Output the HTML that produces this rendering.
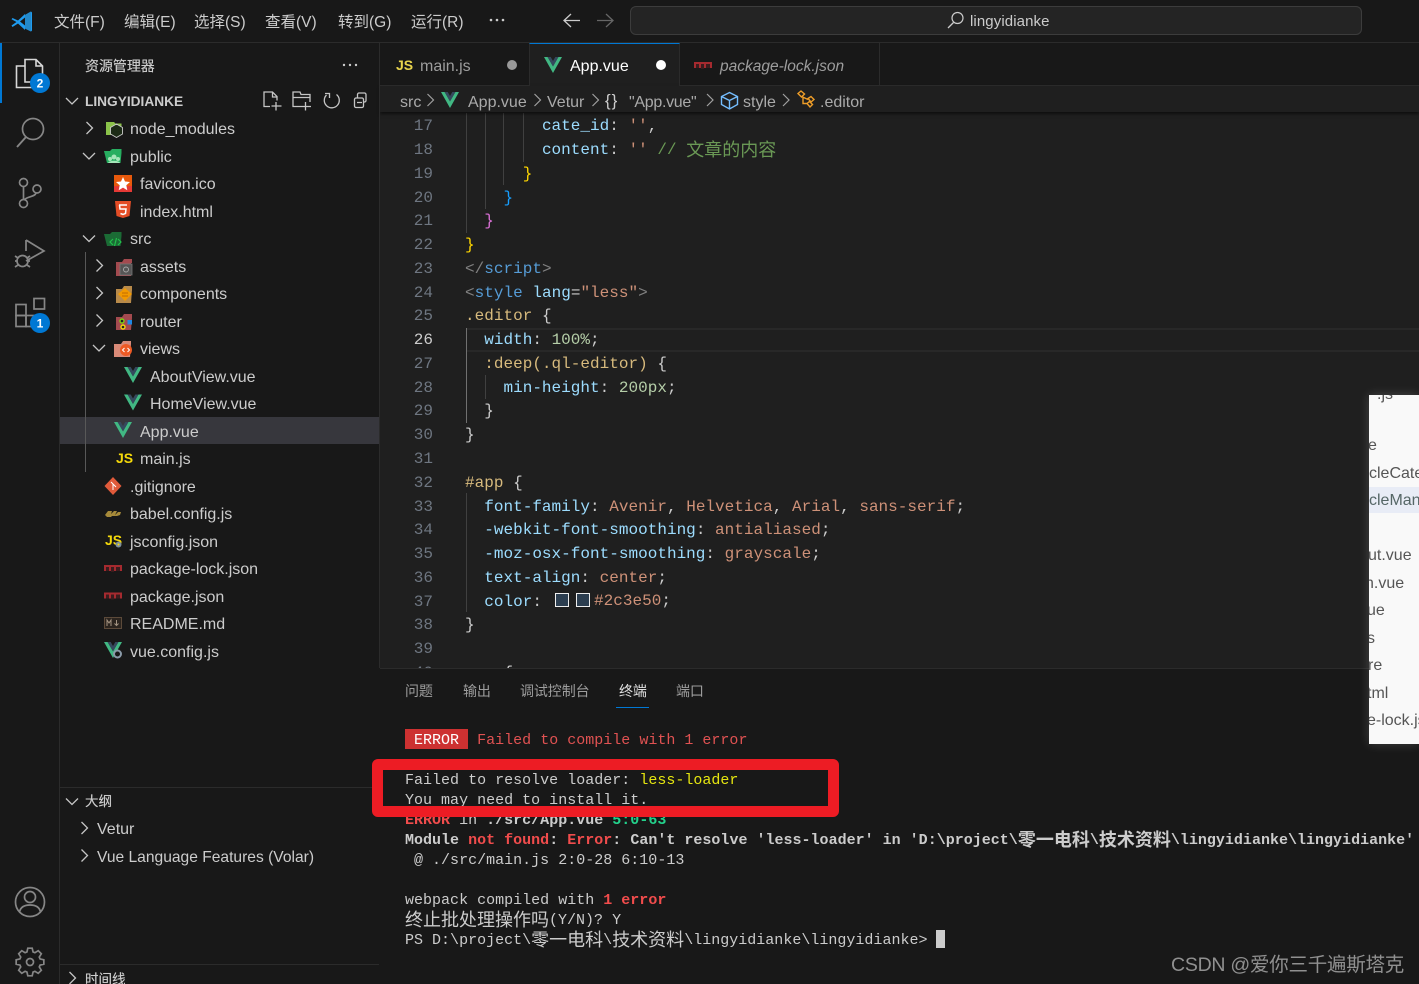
<!DOCTYPE html>
<html lang="zh">
<head>
<meta charset="utf-8">
<title>VS Code</title>
<style>
html,body{margin:0;padding:0;background:#181818;overflow:hidden;width:1419px;height:984px}
body{position:relative;font-family:"Liberation Sans","Noto Sans CJK SC",sans-serif;color:#ccc}
.a{position:absolute}
.t{position:absolute;white-space:pre;line-height:20px;font-size:16px;color:#ccc}
.m{font-size:15.5px;color:#ccc}
.s{font-size:16px;color:#ccc}
.b{color:#aaa;font-size:16px}
.p{font-size:14px;color:#9d9d9d;letter-spacing:-.1px}
#ln{position:absolute;left:380px;top:91.5px;width:53px;text-align:right;font:16px/23.77px "Liberation Mono",monospace;color:#6e7681}
#code{position:absolute;left:465px;top:91.5px;font:16px/23.77px "Liberation Mono","Noto Sans CJK SC",monospace;letter-spacing:.015px;color:#ccc}
#code div,#ln div{height:23.77px;white-space:pre}
.cj{font-family:"Noto Sans CJK SC",sans-serif;font-size:18px;line-height:0;letter-spacing:0;position:relative;top:1.5px}
.p1{color:#9cdcfe}.st{color:#ce9178}.cm{color:#6a9955}.tg{color:#808080}.kw{color:#569cd6}.se{color:#d7ba7d}.nu{color:#b5cea8}.go{color:#ffd700}.bl{color:#179fff}.pk{color:#da70d6}
#term{position:absolute;left:405px;top:731px;font:15px/20px "Liberation Mono","Noto Sans CJK SC",monospace;letter-spacing:.01px;color:#ccc}
#term div{height:20px;white-space:pre}
#term .cj{font-size:18px;top:2px}
.re{color:#f14c4c}
.bd{font-weight:bold}
.ov{position:absolute;left:1369px;top:395px;width:50px;height:349px;background:#f9f9f9;overflow:hidden;box-shadow:0 0 10px rgba(255,255,255,.18)}
.ov span{position:absolute;white-space:pre;font-size:16px;line-height:20px;color:#555}
</style>
</head>
<body>
<!-- editor bg -->
<div class="a" style="left:380px;top:86px;width:1039px;height:582px;background:#1f1f1f"></div>
<div class="a" style="left:466px;top:328px;width:953px;height:2px;background:#282828"></div>
<div class="a" style="left:466px;top:350px;width:953px;height:2px;background:#282828"></div>

<div class="a" id="clip" style="left:380px;top:112px;width:1039px;height:556px;overflow:hidden">
<div style="position:absolute;left:-380px;top:-112px;width:1419px;height:984px">
<div class="a" style="left:466px;top:113px;width:1px;height:120px;background:#404040"></div>
<div class="a" style="left:485px;top:113px;width:1px;height:96px;background:#404040"></div>
<div class="a" style="left:503px;top:113px;width:1px;height:72px;background:#404040"></div>
<div class="a" style="left:523px;top:113px;width:1px;height:49px;background:#404040"></div>
<div class="a" style="left:466px;top:328px;width:1px;height:95px;background:#707070"></div>
<div class="a" style="left:485px;top:375px;width:1px;height:24px;background:#404040"></div>
<div class="a" style="left:466px;top:493px;width:1px;height:119px;background:#404040"></div>
<div id="ln"><div>16</div><div>17</div><div>18</div><div>19</div><div>20</div><div>21</div><div>22</div><div>23</div><div>24</div><div>25</div><div style="color:#ccc">26</div><div>27</div><div>28</div><div>29</div><div>30</div><div>31</div><div>32</div><div>33</div><div>34</div><div>35</div><div>36</div><div>37</div><div>38</div><div>39</div><div>40</div></div>
<div id="code">
<div>        <span class="p1">title</span>: <span class="st">''</span>,</div>
<div>        <span class="p1">cate_id</span>: <span class="st">''</span>,</div>
<div>        <span class="p1">content</span>: <span class="st">''</span> <span class="cm">// <span class="cj">文章的内容</span></span></div>
<div>      <span class="go">}</span></div>
<div>    <span class="bl">}</span></div>
<div>  <span class="pk">}</span></div>
<div><span class="go">}</span></div>
<div><span class="tg">&lt;/</span><span class="kw">script</span><span class="tg">&gt;</span></div>
<div><span class="tg">&lt;</span><span class="kw">style</span> <span class="p1">lang</span>=<span class="st">"less"</span><span class="tg">&gt;</span></div>
<div><span class="se">.editor</span> {</div>
<div>  <span class="p1">width</span>: <span class="nu">100%</span>;</div>
<div>  <span class="se">:deep(.ql-editor)</span> {</div>
<div>    <span class="p1">min-height</span>: <span class="nu">200px</span>;</div>
<div>  }</div>
<div>}</div>
<div> </div>
<div><span class="se">#app</span> {</div>
<div>  <span class="p1">font-family</span>: <span class="st">Avenir</span>, <span class="st">Helvetica</span>, <span class="st">Arial</span>, <span class="st">sans-serif</span>;</div>
<div>  <span class="p1">-webkit-font-smoothing</span>: <span class="st">antialiased</span>;</div>
<div>  <span class="p1">-moz-osx-font-smoothing</span>: <span class="st">grayscale</span>;</div>
<div>  <span class="p1">text-align</span>: <span class="st">center</span>;</div>
<div>  <span class="p1">color</span>:</div>
<div>}</div>
<div> </div>
<div>    {</div>
</div>
<div class="a" style="left:555px;top:593px;width:12px;height:12px;border:1px solid #eee;background:#2c3e50"></div>
<div class="a" style="left:576px;top:593px;width:12px;height:12px;border:1px solid #eee;background:#2c3e50"></div>
<div class="t" style="left:594px;top:591px;font:16px/20px 'Liberation Mono',monospace;letter-spacing:.015px"><span class="st">#2c3e50</span>;</div>
</div>
</div>

<!-- title bar -->
<div class="a" style="left:0;top:0;width:1419px;height:42px;background:#181818;border-bottom:1px solid #2b2b2b"></div>
<div class="t m" style="left:54px;top:13px">文件(F)</div>
<div class="t m" style="left:124px;top:13px">编辑(E)</div>
<div class="t m" style="left:194px;top:13px">选择(S)</div>
<div class="t m" style="left:265px;top:13px">查看(V)</div>
<div class="t m" style="left:338px;top:13px">转到(G)</div>
<div class="t m" style="left:411px;top:13px">运行(R)</div>
<div class="a" style="left:630px;top:6px;width:730px;height:27px;background:#242424;border:1px solid #3c3c3c;border-radius:6px"></div>
<div class="t" style="left:970px;top:12px;font-size:15px;letter-spacing:.1px">lingyidianke</div>

<!-- tabs -->
<div class="a" style="left:380px;top:43px;width:1039px;height:43px;background:#181818;border-bottom:1px solid #2b2b2b;box-sizing:border-box"></div>
<div class="a" style="left:529px;top:43px;width:151px;height:43px;background:#1f1f1f;border-left:1px solid #2b2b2b;border-right:1px solid #2b2b2b;box-sizing:border-box;border-top:1px solid #0078d4"></div>
<div class="a" style="left:879px;top:43px;width:1px;height:43px;background:#2b2b2b"></div>
<div class="t" style="left:396px;top:55px;color:#e8d44d;font-weight:bold;font-size:14px">JS</div>
<div class="t" style="left:420px;top:57px;color:#9d9d9d;font-size:16px">main.js</div>
<div class="t" style="left:570px;top:57px;color:#fff;font-size:16px">App.vue</div>
<div class="t" style="left:720px;top:57px;color:#9d9d9d;font-size:15.5px;font-style:italic">package-lock.json</div>

<!-- breadcrumbs -->
<div class="a" style="left:380px;top:86px;width:1039px;height:26px;background:#1f1f1f;box-shadow:0 2px 3px rgba(0,0,0,.55)"></div>
<div class="t b" style="left:400px;top:93px">src</div>
<div class="t b" style="left:468px;top:93px">App.vue</div>
<div class="t b" style="left:547px;top:93px">Vetur</div>
<div class="t b" style="left:605px;top:91px;color:#ccc;font-size:17px;letter-spacing:1px">{}</div>
<div class="t b" style="left:629px;top:93px;letter-spacing:-.3px">"App.vue"</div>
<div class="t b" style="left:743px;top:93px">style</div>
<div class="t b" style="left:820px;top:93px">.editor</div>

<!-- sidebar -->
<div class="a" style="left:59px;top:43px;width:1px;height:941px;background:#2b2b2b"></div>
<div class="a" style="left:379px;top:43px;width:1px;height:625px;background:#2b2b2b"></div>
<div class="a" style="left:0;top:43px;width:2px;height:60px;background:#0078d4"></div>
<div class="a" style="left:60px;top:417px;width:319px;height:27px;background:#37373d"></div>
<div class="a" style="left:85px;top:252px;width:1px;height:220px;background:#585858"></div>
<div class="a" style="left:60px;top:787px;width:319px;height:1px;background:#2b2b2b"></div>
<div class="a" style="left:60px;top:964px;width:319px;height:1px;background:#2b2b2b"></div>

<div class="t" style="left:85px;top:56px;font-size:14px;letter-spacing:-.05px;text-shadow:0 0 .4px #ccc">资源管理器</div>
<div class="t" style="left:85px;top:92px;font-size:13.7px;font-weight:bold">LINGYIDIANKE</div>
<div class="t s" style="left:130px;top:120px">node_modules</div>
<div class="t s" style="left:130px;top:148px">public</div>
<div class="t s" style="left:140px;top:175px">favicon.ico</div>
<div class="t s" style="left:140px;top:203px">index.html</div>
<div class="t s" style="left:130px;top:230px">src</div>
<div class="t s" style="left:140px;top:258px">assets</div>
<div class="t s" style="left:140px;top:285px">components</div>
<div class="t s" style="left:140px;top:313px">router</div>
<div class="t s" style="left:140px;top:340px">views</div>
<div class="t s" style="left:150px;top:368px">AboutView.vue</div>
<div class="t s" style="left:150px;top:395px">HomeView.vue</div>
<div class="t s" style="left:140px;top:423px">App.vue</div>
<div class="t s" style="left:140px;top:450px">main.js</div>
<div class="t s" style="left:130px;top:478px">.gitignore</div>
<div class="t s" style="left:130px;top:505px">babel.config.js</div>
<div class="t s" style="left:130px;top:533px">jsconfig.json</div>
<div class="t s" style="left:130px;top:560px">package-lock.json</div>
<div class="t s" style="left:130px;top:588px">package.json</div>
<div class="t s" style="left:130px;top:615px">README.md</div>
<div class="t s" style="left:130px;top:643px">vue.config.js</div>
<div class="t" style="left:116px;top:448px;color:#f5d90a;font-weight:bold;font-size:14px">JS</div>
<div class="t" style="left:105px;top:530px;color:#f5d90a;font-weight:bold;font-size:14px">JS</div>
<div class="t" style="left:85px;top:792px;font-size:13.5px;text-shadow:0 0 .4px #ccc">大纲</div>
<div class="t s" style="left:97px;top:820px">Vetur</div>
<div class="t s" style="left:97px;top:848px;font-size:15.6px">Vue Language Features (Volar)</div>
<div class="t" style="left:85px;top:970px;font-size:13.5px;text-shadow:0 0 .4px #ccc">时间线</div>

<!-- panel -->
<div class="a" style="left:380px;top:668px;width:1039px;height:316px;background:#181818;border-top:1px solid #2b2b2b;box-sizing:border-box"></div>
<div class="t p" style="left:405px;top:681px">问题</div>
<div class="t p" style="left:463px;top:681px">输出</div>
<div class="t p" style="left:520px;top:681px">调试控制台</div>
<div class="t p" style="left:619px;top:681px;color:#e0e0e0">终端</div>
<div class="t p" style="left:676px;top:681px">端口</div>
<div class="a" style="left:616px;top:707px;width:33px;height:1px;background:#0078d4"></div>

<div class="a" style="left:405px;top:729px;width:63px;height:20px;background:#cd3131"></div>
<div id="term">
<div><span style="color:#fff"> ERROR </span> <span style="color:#e05252">Failed to compile with 1 error</span></div>
<div> </div>
<div>Failed to resolve loader: <span style="color:#e5e510">less-loader</span></div>
<div>You may need to install it.</div>
<div class="bd"><span class="re">ERROR</span><span style="font-weight:normal"> in </span>./src/App.vue <span style="color:#23d18b">5:0-63</span></div>
<div class="bd">Module <span class="re">not found</span>: <span class="re">Error</span>: Can't resolve 'less-loader' in 'D:\project\<span class="cj">零一电科</span>\<span class="cj">技术资料</span>\lingyidianke\lingyidianke'</div>
<div> @ ./src/main.js 2:0-28 6:10-13</div>
<div> </div>
<div>webpack compiled with <span class="re bd">1 error</span></div>
<div><span class="cj">终止批处理操作吗</span>(Y/N)? Y</div>
<div>PS D:\project\<span class="cj">零一电科</span>\<span class="cj">技术资料</span>\lingyidianke\lingyidianke&gt;</div>
</div>
<div class="a" style="left:936px;top:930px;width:9px;height:18px;background:#ccc"></div>

<!-- red annotation box -->
<div class="a" style="left:372px;top:759px;width:467px;height:58px;box-sizing:border-box;border:11px solid #ed1c24;border-radius:6px"></div>

<!-- white overlay -->
<div class="ov">
<span style="left:8px;top:-10px">.js</span>
<span style="left:-1px;top:41px">e</span>
<div class="a" style="left:0;top:92px;width:50px;height:26px;background:#e8ecf6"></div>
<span style="left:0;top:69px">cleCategory</span>
<span style="left:0;top:96px;color:#566">cleManage</span>
<span style="left:-1px;top:151px">ut.vue</span>
<span style="left:-4px;top:179px">n.vue</span>
<span style="left:-2px;top:206px">ue</span>
<span style="left:-2px;top:234px">s</span>
<span style="left:-1px;top:261px">re</span>
<span style="left:-2px;top:289px">tml</span>
<span style="left:-2px;top:316px">e-lock.json</span>
<span style="left:8px;top:344px">.</span>
</div>

<!-- watermark -->
<div class="t" style="left:1171px;top:955px;font-size:19.5px;color:#909090;letter-spacing:-.25px">CSDN @爱你三千遍斯塔克</div>

<!-- icons -->
<svg class="a" style="left:0;top:0" width="1419" height="984" viewBox="0 0 1419 984" fill="none">
<defs>
<symbol id="v" overflow="visible"><path d="M0 0h3.6L9 9.4 14.4 0H18L9 16z" fill="#41b883"/><path d="M3.6 0h3.1L9 4 11.3 0h3.1L9 9.4z" fill="#35495e"/></symbol>
<symbol id="cr" overflow="visible"><path d="M-3-6 3 0-3 6" stroke="#c5c5c5" stroke-width="1.3"/></symbol>
<symbol id="cd" overflow="visible"><path d="M-6-3 0 3 6-3" stroke="#c5c5c5" stroke-width="1.3"/></symbol>
<symbol id="cb" overflow="visible"><path d="M-3-6 3 0-3 6" stroke="#a0a0a0" stroke-width="1.2"/></symbol>
<symbol id="npm" overflow="visible"><rect x="0" y="0" width="18" height="6" fill="#a52a2f"/><rect x="2" y="2" width="3" height="4" fill="#3a1c1e"/><rect x="7" y="2" width="3" height="5" fill="#3a1c1e"/><rect x="12" y="2" width="4" height="4" fill="#3a1c1e"/></symbol>
</defs>

<!-- vscode logo -->
<path d="M12.500 18 11.500 19.300 16.500 22 11.500 25.500 12.500 27 18 23.500 25 30 25 14 18 20.500z" fill="#1f9cf0"/>
<path d="M24 15.500 31 11.500 32 12.500V30.500L31 31.500 24 28 28 21.500z" fill="#1f9cf0"/>
<path d="M25 15 31 11.500V31.500L25 28.500z" fill="#2489ca"/>
<path d="M25 17.500 20 21.500 25 25.500z" fill="#181818"/>

<!-- title ... -->
<g fill="#ccc"><circle cx="491" cy="20" r="1.3"/><circle cx="497" cy="20" r="1.3"/><circle cx="503" cy="20" r="1.3"/></g>
<path d="M580 20.500H565M571 14l-7 6.500 7 6.500" stroke="#ccc" stroke-width="1.300"/>
<path d="M597 20.500h15M606 14l7 6.500-7 6.500" stroke="#666" stroke-width="1.300"/>
<circle cx="957.500" cy="18" r="5.500" stroke="#ccc" stroke-width="1.200"/><path d="M953.500 22.500 948 28" stroke="#ccc" stroke-width="1.300"/>

<!-- activity -->
<path d="M25 66V59.500h11l6.500 6.500V82H25v-16zM36 59.500V66h6.500M25 66h-8.500v21.500H34V82" stroke="#d7d7d7" stroke-width="1.600"/>
<circle cx="40" cy="83" r="10" fill="#0078d4"/>
<circle cx="33" cy="129" r="10.500" stroke="#868686" stroke-width="1.700"/><path d="M26 137 17 147" stroke="#868686" stroke-width="1.900"/>
<g stroke="#868686" stroke-width="1.700"><circle cx="23.500" cy="182.500" r="4"/><circle cx="23.500" cy="203.500" r="4"/><circle cx="37" cy="189" r="4"/><path d="M23.500 186.500v13M36 193c-1 4-8 3-11.500 6.500"/>
<path d="M26 240l18 11-18 10M26 240v11"/><circle cx="22.500" cy="261" r="5.500"/><path d="M15 256l3 2M30 256l-3 2M15 261h2M28 261h2M15 267l3-2M30 267l-3-2"/>
<rect x="16" y="304.500" width="10" height="11"/><rect x="16" y="315.500" width="10" height="11"/><rect x="26" y="315.500" width="10" height="11"/><rect x="34" y="298.500" width="10.500" height="10.500"/>
<circle cx="30" cy="902" r="14.500"/><circle cx="30" cy="897" r="5.500"/><path d="M19.500 912c1-5 5-7 10.500-7s9.500 2 10.500 7"/>
<path transform="translate(30 962)" d="M13.830-2.190 13.830 2.190 10.040 3.070 9.270 4.930 11.330 8.230 8.230 11.330 4.930 9.270 3.070 10.040 2.190 13.830-2.190 13.830-3.070 10.040-4.930 9.270-8.230 11.330-11.330 8.230-9.270 4.930-10.040 3.070-13.830 2.190-13.830-2.190-10.040-3.070-9.270-4.930-11.330-8.230-8.230-11.330-4.930-9.270-3.070-10.040-2.190-13.830 2.190-13.830 3.070-10.040 4.930-9.270 8.230-11.330 11.330-8.230 9.270-4.930 10.040-3.070z"/>
<circle cx="30" cy="962" r="3.500"/></g>
<circle cx="40" cy="323" r="10" fill="#0078d4"/>
<text x="40" y="87.500" font-family="Liberation Sans" font-size="12" font-weight="bold" fill="#fff" text-anchor="middle">2</text>
<text x="40" y="327.500" font-family="Liberation Sans" font-size="12" font-weight="bold" fill="#fff" text-anchor="middle">1</text>

<!-- sidebar header icons -->
<g fill="#ccc"><circle cx="344" cy="65" r="1.200"/><circle cx="350" cy="65" r="1.200"/><circle cx="356" cy="65" r="1.200"/></g>
<g stroke="#c5c5c5" stroke-width="1.300">
<path d="M270 106.500h-6V92h8.500l4.500 4.500v4M272.500 92v5h4.500M276 102v8.500M271.500 106h10"/>
<path d="M301 106.500h-8V92h7l1 2.500h9V102M293 97.500h17M305.500 102v8.500M301 106.500h10"/>
<path d="M326.500 94a7.500 7.500 0 1 0 10-.5M325 92.500h4.500V97" transform="translate(0 1)"/>
<rect x="354.500" y="98" width="9" height="9.500" rx="1.500"/><path d="M357.500 98v-3.500a1.500 1.500 0 0 1 1.500-1.500h5.500a1.500 1.500 0 0 1 1.500 1.500v6a1.500 1.500 0 0 1-1.500 1.500h-1M357 102.500h5"/>
</g>

<!-- chevrons -->
<use href="#cd" x="72" y="101"/>
<use href="#cr" x="89.500" y="128"/>
<use href="#cd" x="89" y="156"/>
<use href="#cd" x="89" y="238.500"/>
<use href="#cr" x="99.500" y="265.500"/>
<use href="#cr" x="99.500" y="293"/>
<use href="#cr" x="99.500" y="320.500"/>
<use href="#cd" x="99" y="348"/>
<use href="#cd" x="72" y="801.500"/>
<use href="#cr" x="84.500" y="828"/>
<use href="#cr" x="84.500" y="855.500"/>
<use href="#cr" x="72.500" y="978"/>

<!-- breadcrumb icons -->
<use href="#cb" x="430.500" y="100"/>
<use href="#cb" x="537.500" y="100"/>
<use href="#cb" x="595.500" y="100"/>
<use href="#cb" x="710" y="100"/>
<use href="#cb" x="786" y="100"/>
<use href="#v" x="441" y="92"/>
<path d="M729.500 92.500l8 4v8l-8 4.500-8-4.500v-8zM721.500 96.500l8 4 8-4M729.500 100.500V109" stroke="#75beff" stroke-width="1.400"/>
<g stroke="#ee9d28" stroke-width="1.400"><path d="M798 93.500l3-2.500 3.500 3-3 3zM808 98.500l3-2 3 3-3 2.500zM807 103.500l2.500-2 3 3-2.500 2.500zM801.500 96.500l6.500 3M803 97v6.500h4"/></g>

<!-- tab icons -->
<circle cx="512" cy="65" r="5" fill="#999"/>
<circle cx="661" cy="65" r="5" fill="#fff"/>
<use href="#v" x="544" y="57"/>
<use href="#npm" x="694" y="62"/>

<!-- tree file icons -->
<g>
<!-- node_modules -->
<path d="M106 122h8l1.500 1.500h6V135h-15.500z" fill="#8bc34a"/><path d="M116.500 124l6 3.500v6.500l-6 3.500-6-3.500v-6.500z" fill="#1c2b16" stroke="#c9c9c9" stroke-width=".9"/>
<!-- public -->
<path d="M104 151h6l2-2h9.500v4l-1 10H107z" fill="#27ae60"/><circle cx="114" cy="157" r="2.500" fill="#a5e6b9"/><circle cx="110" cy="159" r="2" fill="#a5e6b9"/><circle cx="118" cy="159" r="2" fill="#a5e6b9"/><path d="M108 163c1-3 11-3 12 0z" fill="#a5e6b9"/>
<!-- favicon -->
<rect x="114" y="175" width="18" height="17" fill="#e8590c"/><path d="M114 186h18v6h-18z" fill="#e53935"/><path d="M123 177l2 4.500 5 .5-3.700 3.300 1 4.900-4.300-2.600-4.300 2.600 1-4.900L116 182l5-.5z" fill="#fff"/>
<!-- html -->
<path d="M115 201h16l-1.500 15-6.500 2-6.500-2z" fill="#e44d26"/><path d="M119 205h8M119.500 205l.5 4h6l-.5 4.500-2.500 1-2.500-1" stroke="#fff" stroke-width="1.500"/>
<!-- src -->
<path d="M104 234h6l2-2h9.500v4l-1 10H107z" fill="#1b6b35"/><path d="M113 239l-3 3 3 3M118 239l3 3-3 3M116.500 238l-2 8" stroke="#22c04a" stroke-width="1.200"/>
<!-- assets -->
<path d="M116 262h6l2-3h8v4h-1v13h-15z" fill="#a34a4f"/><rect x="120" y="264" width="12" height="11" fill="#555" stroke="#777" stroke-width=".8"/><circle cx="126" cy="269.500" r="2.500" stroke="#aaa" stroke-width=".9"/>
<!-- components -->
<path d="M116 289h6l2-3h8v4l-1 13h-15z" fill="#b88a4a"/><path d="M125 288l7 6-7 7-7-7z" fill="#f29900"/><path d="M122 293h6M122 296h6" stroke="#c26c00" stroke-width="1"/>
<!-- router -->
<path d="M116 317h6l2-3h8v4l-1 12h-15z" fill="#a34a4f"/><circle cx="122" cy="321" r="2" stroke="#7cd414" stroke-width="1.400" fill="#222"/><rect x="127.500" y="320" width="4.500" height="4.500" fill="#1e88e5"/><circle cx="123" cy="327" r="2" stroke="#f5d90a" stroke-width="1.400" fill="#222"/>
<!-- views -->
<path d="M114 344h7l2-3h8v3l-1 13h-16z" fill="#d98a78"/><circle cx="126" cy="350" r="6" fill="#ee5a24"/><path d="M124.500 348l-2 2 2 2M127.500 348l2 2-2 2" stroke="#fff" stroke-width="1"/>
<use href="#v" x="124" y="367"/>
<use href="#v" x="124" y="394.500"/>
<use href="#v" x="114" y="422"/>
<!-- git -->
<path d="M113 477l8.500 9-8.500 9-8.500-9z" fill="#e05a3a"/><path d="M111 482l5 5M113 484v6" stroke="#fff" stroke-width="1"/>
<!-- babel -->
<path d="M105 515l3-4h4l-1 3 3-3h3l-2 4 3-3h3l-1 3-3 1h-5l-1 1h-4z" fill="#a68a3a"/>
<!-- jsconfig gear -->
<circle cx="118.500" cy="544.500" r="3" fill="#7d8f9c"/><circle cx="118.500" cy="544.500" r="1" fill="#f5d90a"/>
<use href="#npm" x="104" y="565"/>
<use href="#npm" x="104" y="592.500"/>
<!-- md -->
<rect x="104.500" y="617.500" width="17" height="11" stroke="#5c4a3a" fill="#2b241e"/><path d="M107 626v-6l2 3 2-3v6M116.500 620v5M114.500 623.500l2 2 2-2" stroke="#a49482" stroke-width="1"/>
<!-- vue.config -->
<path transform="translate(104 642)" d="M0 0h3.600L9 9.400 14.400 0H18L9 16z" fill="#41b883"/><path transform="translate(104 642)" d="M3.600 0h3.100L9 4 11.300 0h3.100L9 9.400z" fill="#35495e"/>
<circle cx="117.500" cy="654" r="3.500" stroke="#8a9aa8" stroke-width="2" fill="#181818"/>
</g>
</svg>
</body>
</html>
